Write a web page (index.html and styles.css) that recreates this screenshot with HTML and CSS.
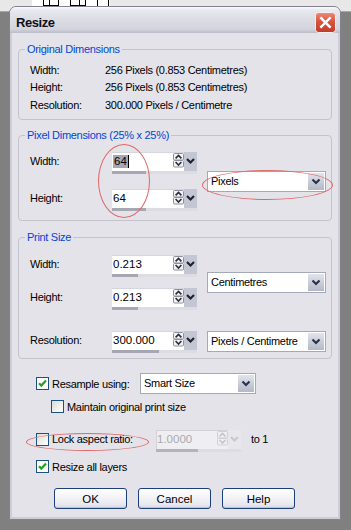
FILE: index.html
```html
<!DOCTYPE html>
<html>
<head>
<meta charset="utf-8">
<title>Resize</title>
<link rel="stylesheet" href="styles.css">
</head>
<body>
<div class="desktop">
  <div class="topstrip">
    <div class="toolpanel">
      <svg width="78" height="12" viewBox="0 0 78 12">
        <rect x="11.5" y="-1.5" width="15" height="7" fill="none" stroke="#000"/>
        <line x1="17.5" y1="0" x2="17.5" y2="5" stroke="#000"/>
        <rect x="38.5" y="-1.5" width="15" height="7" fill="none" stroke="#000"/>
        <line x1="47.5" y1="0" x2="47.5" y2="5" stroke="#000"/>
        <line x1="65.5" y1="0" x2="65.5" y2="12" stroke="#000"/>
        <line x1="76.5" y1="0" x2="76.5" y2="12" stroke="#000"/>
      </svg>
    </div>
  </div>

  <div class="dialog">
    <div class="titlebar">
      <span class="title">Resize</span>
      <span class="close">
        <svg width="21" height="21" viewBox="0 0 21 21">
          <defs>
            <linearGradient id="cg" x1="0" y1="0" x2="0" y2="1">
              <stop offset="0" stop-color="#ee8c7c"/>
              <stop offset="0.45" stop-color="#d9543f"/>
              <stop offset="1" stop-color="#bf3a2a"/>
            </linearGradient>
          </defs>
          <rect x="0.5" y="0.5" width="20" height="20" rx="3" fill="url(#cg)" stroke="#f4f0f0"/>
          <path d="M6.2 6.2 L14.8 14.8 M14.8 6.2 L6.2 14.8" stroke="#fff" stroke-width="2.4" stroke-linecap="square"/>
        </svg>
      </span>
    </div>

    <div class="client">
      <fieldset class="group g1">
        <legend>Original Dimensions</legend>
        <div class="info">
          <span>Width:</span><span>256 Pixels (0.853 Centimetres)</span>
          <span>Height:</span><span>256 Pixels (0.853 Centimetres)</span>
          <span>Resolution:</span><span>300.000 Pixels / Centimetre</span>
        </div>
      </fieldset>

      <fieldset class="group g2">
        <legend>Pixel Dimensions (25% x 25%)</legend>
        <div class="dims">
          <span class="lbl">Width:</span>
          <div class="num">
            <span class="field"><span class="sel">64</span><span class="caret"></span></span>
            <span class="spin"><svg width="11" height="19" viewBox="0 0 11 19"><rect x="0.5" y="1.5" width="10" height="6.5" rx="1" fill="#f3f3f7" stroke="#8e8e9c"/><rect x="0.5" y="8.5" width="10" height="6.5" rx="1" fill="#f3f3f7" stroke="#8e8e9c"/><path d="M2.6 6.4 L5.5 3.4 L8.4 6.4" fill="none" stroke="#2c2c38" stroke-width="1.6"/><path d="M2.6 10 L5.5 13 L8.4 10" fill="none" stroke="#2c2c38" stroke-width="1.6"/></svg></span>
            <span class="drop"><svg width="13" height="19" viewBox="0 0 13 19"><path d="M3 7 L6.5 10.5 L10 7" fill="none" stroke="#22222e" stroke-width="2.2"/></svg></span>
            <span class="track"><span class="bar" style="width:34px"></span></span>
          </div>
          <div class="combo c2">
            <span class="ctext">Pixels</span>
            <span class="carrow"><svg width="16" height="17" viewBox="0 0 16 17"><path d="M4.5 6.5 L8 10 L11.5 6.5" fill="none" stroke="#2a3348" stroke-width="2.2"/></svg></span>
          </div>
          <span class="lbl">Height:</span>
          <div class="num">
            <span class="field">64</span>
            <span class="spin"><svg width="11" height="19" viewBox="0 0 11 19"><rect x="0.5" y="1.5" width="10" height="6.5" rx="1" fill="#f3f3f7" stroke="#8e8e9c"/><rect x="0.5" y="8.5" width="10" height="6.5" rx="1" fill="#f3f3f7" stroke="#8e8e9c"/><path d="M2.6 6.4 L5.5 3.4 L8.4 6.4" fill="none" stroke="#2c2c38" stroke-width="1.6"/><path d="M2.6 10 L5.5 13 L8.4 10" fill="none" stroke="#2c2c38" stroke-width="1.6"/></svg></span>
            <span class="drop"><svg width="13" height="19" viewBox="0 0 13 19"><path d="M3 7 L6.5 10.5 L10 7" fill="none" stroke="#22222e" stroke-width="2.2"/></svg></span>
            <span class="track"><span class="bar" style="width:34px"></span></span>
          </div>
        </div>
      </fieldset>

      <fieldset class="group g3">
        <legend>Print Size</legend>
        <div class="dims print">
          <span class="lbl">Width:</span>
          <div class="num">
            <span class="field">0.213</span>
            <span class="spin"><svg width="11" height="19" viewBox="0 0 11 19"><rect x="0.5" y="1.5" width="10" height="6.5" rx="1" fill="#f3f3f7" stroke="#8e8e9c"/><rect x="0.5" y="8.5" width="10" height="6.5" rx="1" fill="#f3f3f7" stroke="#8e8e9c"/><path d="M2.6 6.4 L5.5 3.4 L8.4 6.4" fill="none" stroke="#2c2c38" stroke-width="1.6"/><path d="M2.6 10 L5.5 13 L8.4 10" fill="none" stroke="#2c2c38" stroke-width="1.6"/></svg></span>
            <span class="drop"><svg width="13" height="19" viewBox="0 0 13 19"><path d="M3 7 L6.5 10.5 L10 7" fill="none" stroke="#22222e" stroke-width="2.2"/></svg></span>
            <span class="track"><span class="bar" style="width:26px"></span></span>
          </div>
          <div class="combo c2">
            <span class="ctext">Centimetres</span>
            <span class="carrow"><svg width="16" height="17" viewBox="0 0 16 17"><path d="M4.5 6.5 L8 10 L11.5 6.5" fill="none" stroke="#2a3348" stroke-width="2.2"/></svg></span>
          </div>
          <span class="lbl">Height:</span>
          <div class="num">
            <span class="field">0.213</span>
            <span class="spin"><svg width="11" height="19" viewBox="0 0 11 19"><rect x="0.5" y="1.5" width="10" height="6.5" rx="1" fill="#f3f3f7" stroke="#8e8e9c"/><rect x="0.5" y="8.5" width="10" height="6.5" rx="1" fill="#f3f3f7" stroke="#8e8e9c"/><path d="M2.6 6.4 L5.5 3.4 L8.4 6.4" fill="none" stroke="#2c2c38" stroke-width="1.6"/><path d="M2.6 10 L5.5 13 L8.4 10" fill="none" stroke="#2c2c38" stroke-width="1.6"/></svg></span>
            <span class="drop"><svg width="13" height="19" viewBox="0 0 13 19"><path d="M3 7 L6.5 10.5 L10 7" fill="none" stroke="#22222e" stroke-width="2.2"/></svg></span>
            <span class="track"><span class="bar" style="width:26px"></span></span>
          </div>
          <span class="lbl res">Resolution:</span>
          <div class="num res">
            <span class="field">300.000</span>
            <span class="spin"><svg width="11" height="19" viewBox="0 0 11 19"><rect x="0.5" y="1.5" width="10" height="6.5" rx="1" fill="#f3f3f7" stroke="#8e8e9c"/><rect x="0.5" y="8.5" width="10" height="6.5" rx="1" fill="#f3f3f7" stroke="#8e8e9c"/><path d="M2.6 6.4 L5.5 3.4 L8.4 6.4" fill="none" stroke="#2c2c38" stroke-width="1.6"/><path d="M2.6 10 L5.5 13 L8.4 10" fill="none" stroke="#2c2c38" stroke-width="1.6"/></svg></span>
            <span class="drop"><svg width="13" height="19" viewBox="0 0 13 19"><path d="M3 7 L6.5 10.5 L10 7" fill="none" stroke="#22222e" stroke-width="2.2"/></svg></span>
            <span class="track"><span class="bar" style="width:47px"></span></span>
          </div>
          <div class="combo c3">
            <span class="ctext">Pixels / Centimetre</span>
            <span class="carrow"><svg width="16" height="17" viewBox="0 0 16 17"><path d="M4.5 6.5 L8 10 L11.5 6.5" fill="none" stroke="#2a3348" stroke-width="2.2"/></svg></span>
          </div>
        </div>
      </fieldset>

      <div class="options">
        <div class="opt r1">
          <span class="cb on"><svg width="11" height="11" viewBox="0 0 11 11"><path d="M2 5.2 L4.3 7.6 L9 2.6" fill="none" stroke="#21a121" stroke-width="2.2"/></svg></span>
          <span class="olbl w1">Resample using:</span>
          <div class="combo smart">
            <span class="ctext">Smart Size</span>
            <span class="carrow"><svg width="16" height="17" viewBox="0 0 16 17"><path d="M4.5 6.5 L8 10 L11.5 6.5" fill="none" stroke="#2a3348" stroke-width="2.2"/></svg></span>
          </div>
        </div>
        <div class="opt r2">
          <span class="cb"></span>
          <span class="olbl">Maintain original print size</span>
        </div>
        <div class="opt r3">
          <span class="cb"></span>
          <span class="olbl w3">Lock aspect ratio:</span>
          <div class="num disabled">
            <span class="field">1.0000</span>
            <span class="spin"><svg width="11" height="19" viewBox="0 0 11 19"><rect x="0.5" y="1.5" width="10" height="6.5" rx="1" fill="#efeff2" stroke="#cfcfd6"/><rect x="0.5" y="8.5" width="10" height="6.5" rx="1" fill="#efeff2" stroke="#cfcfd6"/><path d="M2.6 6.4 L5.5 3.4 L8.4 6.4" fill="none" stroke="#c4c4ca" stroke-width="1.6"/><path d="M2.6 10 L5.5 13 L8.4 10" fill="none" stroke="#c4c4ca" stroke-width="1.6"/></svg></span>
            <span class="drop"><svg width="13" height="19" viewBox="0 0 13 19"><path d="M3 7 L6.5 10.5 L10 7" fill="none" stroke="#c8c8ce" stroke-width="2.2"/></svg></span>
            <span class="track"><span class="bar" style="width:42px"></span></span>
          </div>
          <span class="toone">to 1</span>
        </div>
        <div class="opt r4">
          <span class="cb on"><svg width="11" height="11" viewBox="0 0 11 11"><path d="M2 5.2 L4.3 7.6 L9 2.6" fill="none" stroke="#21a121" stroke-width="2.2"/></svg></span>
          <span class="olbl">Resize all layers</span>
        </div>
        <div class="buttons">
          <span class="btn">OK</span>
          <span class="btn">Cancel</span>
          <span class="btn">Help</span>
        </div>
      </div>
    </div>

    <span class="ring ring1"></span>
    <span class="ring ring2"></span>
    <span class="ring ring3"></span>
  </div>
</div>
</body>
</html>
```
FILE: styles.css
```css
* { box-sizing: border-box; }
html, body { margin: 0; padding: 0; }
body {
  width: 351px;
  height: 530px;
  overflow: hidden;
  background: #808080;
  font-family: "Liberation Sans", Arial, sans-serif;
  font-size: 11px;
  letter-spacing: -0.3px;
  color: #000;
}
.desktop { position: relative; width: 351px; height: 530px; }

.topstrip {
  height: 12px;
  background: #e8e8e8;
  border-bottom: 1px solid #a8a8a8;
  display: flex;
}
.toolpanel { margin-left: 32px; width: 78px; height: 11px; background: #fff; }
.toolpanel svg { display: block; }

/* window */
.dialog {
  position: absolute;
  left: 9px;
  top: 6px;
  width: 332px;
  height: 514px;
  border: 1px solid #82828e;
  border-radius: 7px 7px 0 0;
  background: #cdcdd8;
  display: flex;
  flex-direction: column;
}
.titlebar {
  flex: none;
  height: 26px;
  display: flex;
  justify-content: space-between;
  align-items: flex-start;
  border-radius: 6px 6px 0 0;
  background: linear-gradient(#fbfbfd 0, #e9e9f0 3px, #dddde5 45%, #d4d4de 85%, #bcbcca 100%);
}
.title {
  margin: 9px 0 0 6px;
  font-size: 13px;
  font-weight: bold;
  line-height: 13px;
  letter-spacing: -0.45px;
  color: #101018;
}
.close { margin: 5px 4px 0 0; width: 21px; height: 21px; }
.close svg { display: block; }

.client {
  flex: 1;
  margin: 0 2px 2px;
  background: #e4e3e9;
  padding-top: 9.5px;
  display: flex;
  flex-direction: column;
}

/* group boxes */
.group {
  margin: 0 6px;
  padding: 0;
  border: 1px solid #c3c3cd;
  border-radius: 4px;
  min-width: 0;
}
.group legend {
  margin-left: 6px;
  padding: 0 2px;
  line-height: 13px;
  color: #0046d5;
}
.g2 { margin-top: 8.5px; }
.g3 { margin-top: 9.5px; }

.info {
  display: grid;
  grid-template-columns: 75px 1fr;
  grid-auto-rows: 17.5px;
  line-height: 17.5px;
  padding: 6px 0 5px 11px;
}

.dims {
  display: grid;
  grid-template-columns: 82px 85px 129px;
  grid-template-rows: 22px 22px;
  row-gap: 15px;
  padding: 10.5px 0 9px 11px;
}
.dims.print {
  grid-template-rows: 22px 22px 32px;
  row-gap: 11px;
  padding: 11.5px 0 5px 11px;
}
.dims.print .res { margin-top: 10px; }
.lbl { line-height: 19px; }
.combo.c2 { grid-column: 3; grid-row: 1 / span 2; align-self: center; margin-left: 10px; }
.combo.c3 { grid-column: 3; grid-row: 3; margin-left: 10px; margin-top: 10px; }

/* numeric edit */
.num {
  width: 85px;
  height: 22px;
  display: grid;
  grid-template-columns: 1fr 11px 13px;
  grid-template-rows: 19px 3px;
  background: #fff;
  box-shadow: inset 0 1px 0 #d6d6de;
}
.num .field {
  padding-left: 1px;
  font-size: 11.5px;
  letter-spacing: 0;
  line-height: 19px;
  display: flex;
  align-items: center;
  white-space: nowrap;
}
.num .sel {
  background: #a6a6b4;
  line-height: 13px;
  padding: 0 1px;
}
.num .caret { width: 1px; height: 13px; background: #000; }
.num .spin svg, .num .drop svg { display: block; }
.num .drop { background: #c3c7d3; }
.num .track {
  grid-column: 1 / span 3;
  background: #dcdce2;
  display: flex;
}
.num .bar { background: #a7a7b3; height: 3px; }

.num.disabled { background: #efeff2; box-shadow: inset 0 0 0 1px #d2d2d8; }
.num.disabled .field { color: #a9a9b2; }
.num.disabled .drop { background: #e8e8ec; }
.num.disabled .bar { background: #b3b3bb; }

/* combo */
.combo {
  width: 119px;
  height: 21px;
  display: flex;
  border: 1px solid #a3a9b7;
  background: #fff;
}
.combo .ctext { flex: 1; padding-left: 3px; line-height: 19px; white-space: nowrap; }
.combo .carrow {
  width: 16px;
  margin: 1px;
  background: linear-gradient(#e2e4ec, #c6cad6 60%, #b4b8c8);
  display: flex;
  align-items: center;
  justify-content: center;
}
.combo .carrow svg { display: block; }
.combo.smart { width: 116px; }

/* options */
.options {
  padding-left: 24px;
  display: flex;
  flex-direction: column;
  align-items: flex-start;
}
.opt { display: flex; align-items: center; }
.cb {
  width: 13px;
  height: 13px;
  flex: none;
  border: 1px solid #1c5180;
  background: linear-gradient(135deg, #dcdcd6, #f6f6f4 75%, #fff);
  display: flex;
  align-items: center;
  justify-content: center;
}
.cb.on { background: #fff; }
.cb svg { display: block; }
.olbl { margin-left: 3px; white-space: nowrap; }
.r1 { margin-top: 14px; height: 21px; }
.olbl.w1 { width: 88px; }
.r2 { margin-top: 6px; margin-left: 15px; height: 13px; }
.r3 { margin-top: 17px; align-items: flex-start; }
.r3 .cb { margin-top: 3px; }
.r3 .olbl { line-height: 19px; }
.olbl.w3 { width: 104px; }
.toone { margin-left: 10px; line-height: 19px; }
.r4 { margin-top: 8px; height: 13px; }

.buttons { margin-top: 15px; margin-left: 18px; display: flex; gap: 11px; }
.btn {
  width: 73px;
  height: 21px;
  border: 1px solid #1d3f7c;
  border-radius: 3px;
  background: linear-gradient(#ffffff, #f5f5f8 40%, #e6e6ee 85%, #cdd1e2);
  box-shadow: inset 0 -1px 0 #b9c3de;
  display: flex;
  align-items: center;
  justify-content: center;
  letter-spacing: 0;
  font-size: 11.5px;
}

/* red annotation ellipses drawn over the dialog */
.ring {
  position: absolute;
  border: 1px solid #e06868;
  border-radius: 50%;
}
.ring1 { left: 88px; top: 137px; width: 52px; height: 74px; }
.ring2 { left: 192px; top: 163px; width: 131px; height: 30px; }
.ring3 { left: 16px; top: 426px; width: 123px; height: 18px; }
```
